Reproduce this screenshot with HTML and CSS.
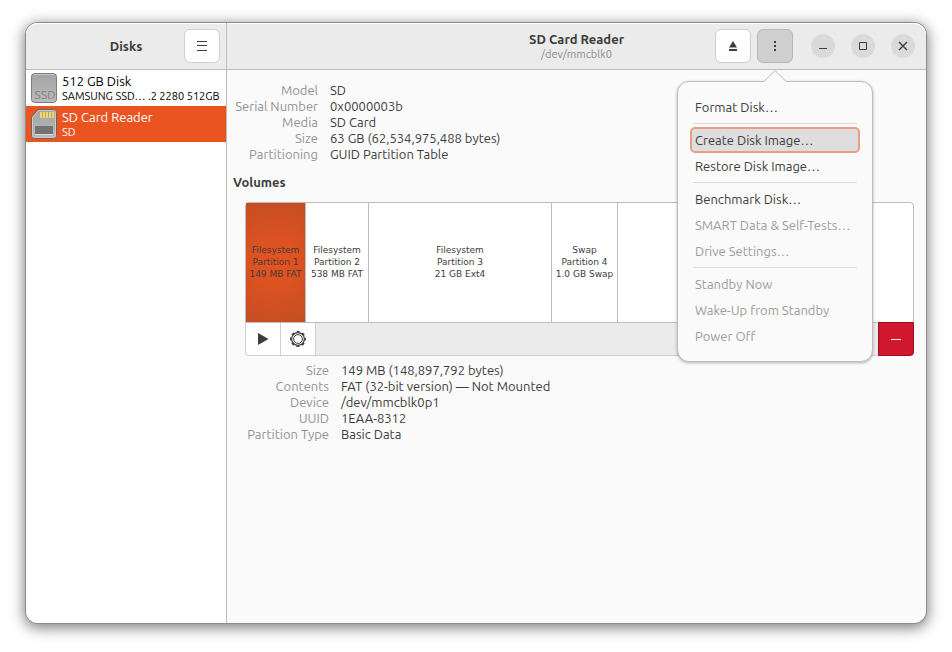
FILE: index.html
```
<!DOCTYPE html>
<html lang="en">
<head>
  <meta charset="UTF-8" />
  <title>Disks</title>
  <link rel="stylesheet" href="styles.css">
</head>
<body>

  <div class="window">
    <aside class="sidebar">
      <header class="titlebar sidebar-title">
        <h1>Disks</h1>
        <button type="button" class="tool" aria-label="Main menu">
          <svg width="16" height="16" viewBox="0 0 16 16"><path d="M3 3.5h10M3 7.5h10M3 12.5h10" stroke="#3d3d3d" fill="none" /></svg>
        </button>
      </header>

      <button type="button" class="disk">
        <svg width="28" height="32" viewBox="0 0 28 32">
          <defs>
            <linearGradient id="metal" x1="0" y1="0" x2="0" y2="1">
              <stop offset="0" stop-color="#a2a2a2" />
              <stop offset="1" stop-color="#bcbcbc" />
            </linearGradient>
          </defs>
          <rect x="1.5" y="1.5" width="25" height="29" rx="3" fill="url(#metal)" stroke="#7d7d7d" />
          <path d="M4 2.5h20" stroke="#c4c4c4" />
          <text x="15" y="27" class="ssd">SSD</text>
        </svg>
        <span class="disk-text">
          <span class="disk-name">512 GB Disk</span>
          <span class="disk-info">SAMSUNG SSD… .2 2280 512GB</span>
        </span>
      </button>

      <button type="button" class="disk selected">
        <svg width="28" height="32" viewBox="0 0 28 32">
          <path d="M8 1.5h15.500a3 3 0 0 1 3 3v23a3 3 0 0 1-3 3h-19a3 3 0 0 1-3-3V9z" fill="url(#metal)" stroke="#6f6259" />
          <path d="M8.500 2.500h15a2 2 0 0 1 2 2v23a2 2 0 0 1-2 2h-19a2 2 0 0 1-2-2V9.500z" fill="none" stroke="#c9c9c9" />
          <path d="M11 4v6M14 4v6M17 4v6M20 4v6M23 4v6" stroke="#fbd65c" stroke-width="2" />
          <rect x="5" y="18" width="18" height="8" fill="#737373" />
          <path d="M5 26.500h18" stroke="#dcdcdc" />
        </svg>
        <span class="disk-text">
          <span class="disk-name">SD Card Reader</span>
          <span class="disk-info">SD</span>
        </span>
      </button>
    </aside>

    <main class="content">
      <header class="titlebar main-title">
        <div class="heading">
          <h2>SD Card Reader</h2>
          <p>/dev/mmcblk0</p>
        </div>
        <div class="actions">
          <button type="button" class="tool" aria-label="Eject">
            <svg width="16" height="16" viewBox="0 0 16 16"><path d="M8 3l4 6.500H4zM4 11h8v2H4z" fill="#3d3d3d" /></svg>
          </button>
          <div class="menu-holder">
            <button type="button" class="tool pressed" aria-label="Drive menu">
              <svg width="16" height="16" viewBox="0 0 16 16"><path d="M7 3h2v2H7zM7 7h2v2H7zM7 11h2v2H7z" fill="#3d3d3d" /></svg>
            </button>
            <div class="popover">
              <svg class="arrow" width="24" height="12" viewBox="0 0 24 12"><path d="M1 11.500L12 .5L23 11.500V12H1z" fill="#fafafa" /><path d="M1 11.500L12 .5L23 11.500" fill="none" stroke="#bdbdbd" /></svg>
              <button type="button">Format Disk…</button>
              <hr>
              <button type="button" class="focused">Create Disk Image…</button>
              <button type="button">Restore Disk Image…</button>
              <hr>
              <button type="button">Benchmark Disk…</button>
              <button type="button" disabled>SMART Data &amp; Self-Tests…</button>
              <button type="button" disabled>Drive Settings…</button>
              <hr>
              <button type="button" disabled>Standby Now</button>
              <button type="button" disabled>Wake-Up from Standby</button>
              <button type="button" disabled>Power Off</button>
            </div>
          </div>
          <div class="controls">
            <button type="button" class="control" aria-label="Minimize">
              <svg width="16" height="16" viewBox="0 0 16 16"><path d="M4 10.500h8" stroke="#3d3d3d" /></svg>
            </button>
            <button type="button" class="control" aria-label="Maximize">
              <svg width="16" height="16" viewBox="0 0 16 16"><path d="M4.500 4.500h7v7h-7z" fill="none" stroke="#3d3d3d" /></svg>
            </button>
            <button type="button" class="control" aria-label="Close">
              <svg width="16" height="16" viewBox="0 0 16 16"><path d="M4 4l8 8M12 4l-8 8" stroke="#3d3d3d" stroke-width="1.400" /></svg>
            </button>
          </div>
        </div>
      </header>

      <div class="details">
        <dl class="info">
          <dt>Model</dt><dd>SD</dd>
          <dt>Serial Number</dt><dd>0x0000003b</dd>
          <dt>Media</dt><dd>SD Card</dd>
          <dt>Size</dt><dd>63 GB (62,534,975,488 bytes)</dd>
          <dt>Partitioning</dt><dd>GUID Partition Table</dd>
        </dl>

        <h3>Volumes</h3>

        <div class="volumes">
          <div class="partitions">
            <button type="button" class="partition selected">Filesystem<br>Partition 1<br>149 MB FAT</button>
            <button type="button" class="partition">Filesystem<br>Partition 2<br>538 MB FAT</button>
            <button type="button" class="partition">Filesystem<br>Partition 3<br>21 GB Ext4</button>
            <button type="button" class="partition">Swap<br>Partition 4<br>1.0 GB Swap</button>
            <button type="button" class="partition" aria-label="Free space"></button>
          </div>
          <div class="toolbar">
            <button type="button" aria-label="Mount">
              <svg width="16" height="16" viewBox="0 0 16 16"><path d="M3 2l10.500 6L3 14z" fill="#3d3d3d" /></svg>
            </button>
            <button type="button" aria-label="Partition options">
              <svg width="16" height="16" viewBox="0 0 16 16" fill="none" stroke="#3d3d3d">
                <circle cx="8" cy="8" r="7.300" stroke-width="1.400" stroke-dasharray="3 2.734" stroke-dashoffset="1.500" />
                <circle cx="8" cy="8" r="6.400" stroke-width="1.200" />
                <circle cx="8" cy="8" r="4.400" />
              </svg>
            </button>
            <button type="button" class="delete" aria-label="Delete partition">
              <svg width="16" height="16" viewBox="0 0 16 16"><path d="M3 8.500h10" stroke="#fff" /></svg>
            </button>
          </div>

          <dl class="info">
            <dt>Size</dt><dd>149 MB (148,897,792 bytes)</dd>
            <dt>Contents</dt><dd>FAT (32-bit version) — Not Mounted</dd>
            <dt>Device</dt><dd>/dev/mmcblk0p1</dd>
            <dt>UUID</dt><dd>1EAA-8312</dd>
            <dt>Partition Type</dt><dd>Basic Data</dd>
          </dl>
        </div>
      </div>
    </main>
  </div>

</body>
</html>
```
FILE: styles.css
```
* {
  box-sizing: border-box;
}
body {
  margin: 0;
  padding: 23px 26px 29px;
  height: 100vh;
  display: flex;
  background: #fff;
  color: #3d3d3d;
  font-family: Ubuntu, "Noto Sans", sans-serif;
  font-size: 13px;
  line-height: 16px;
}
h1, h2, h3, p, dl, dd {
  margin: 0;
  font-size: 13px;
}
button {
  margin: 0;
  padding: 0;
  border: none;
  background: none;
  color: inherit;
  font: inherit;
}
svg {
  display: block;
}

/* window frame */
.window {
  flex: 1;
  display: flex;
  border-radius: 12px;
  background: #fafafa;
  box-shadow: 0 0 0 1px #8c8c8c, 0 3px 14px 2px rgba(0, 0, 0, 0.5);
}
.titlebar {
  height: 47px;
  background: #ebebeb;
  border-bottom: 1px solid #bdbdbd;
  box-shadow: inset 0 1px #fff;
}

/* sidebar */
.sidebar {
  width: 201px;
  flex: none;
  background: #fff;
  border-right: 1px solid #bdbdbd;
  border-radius: 12px 0 0 12px;
}
.sidebar-title {
  display: flex;
  align-items: center;
  padding-right: 6px;
  border-top-left-radius: 12px;
}
.sidebar-title h1 {
  flex: 1;
  padding-left: 42px;
  text-align: center;
}
.tool {
  width: 36px;
  height: 34px;
  display: flex;
  align-items: center;
  justify-content: center;
  background: #fff;
  border: 1px solid #cfcfcf;
  border-radius: 6px;
}
.tool.pressed {
  background: #cfcfcf;
  border-color: #b8b8b8;
}
.disk {
  width: 100%;
  height: 36px;
  padding: 0 4px;
  display: flex;
  align-items: center;
  gap: 4px;
  color: #000;
  text-align: left;
  white-space: nowrap;
}
.disk.selected {
  background: #e95420;
  color: #fff;
}
.disk svg {
  flex: none;
}
.disk-text {
  min-width: 0;
}
.disk-name, .disk-info {
  display: block;
}
.disk-info {
  font-size: 11px;
  line-height: 14px;
}
.ssd {
  font-size: 12px;
  fill: #808080;
  text-anchor: middle;
}

/* main pane */
.content {
  flex: 1;
  min-width: 0;
}
.main-title {
  display: grid;
  grid-template-columns: 1fr auto 1fr;
  align-items: center;
  border-top-right-radius: 12px;
}
.heading {
  grid-column: 2;
  text-align: center;
}
.heading p {
  font-size: 11px;
  line-height: 14px;
  color: #8c8c8c;
}
.actions {
  display: flex;
  align-items: center;
  justify-content: flex-end;
  gap: 6px;
  padding-right: 11px;
}
.controls {
  display: flex;
  gap: 16px;
  margin-left: 12px;
}
.control {
  width: 24px;
  height: 24px;
  display: flex;
  align-items: center;
  justify-content: center;
  border-radius: 50%;
  background: #dadada;
}

/* drive menu */
.menu-holder {
  position: relative;
}
.popover {
  position: absolute;
  top: 52px;
  left: 50%;
  width: 196px;
  margin-left: -98px;
  padding: 12px;
  background: #fafafa;
  border: 1px solid #bdbdbd;
  border-radius: 12px;
  box-shadow: 0 1px 3px rgba(0, 0, 0, 0.3);
}
.arrow {
  position: absolute;
  top: -12px;
  left: 50%;
  margin-left: -12px;
}
.popover button {
  display: block;
  width: 100%;
  height: 26px;
  padding: 0 3px;
  border: 2px solid transparent;
  border-radius: 5px;
  text-align: left;
  white-space: nowrap;
}
.popover button:disabled {
  color: #9c9c9c;
}
.popover .focused {
  background: #dedede;
  border-color: #e99f83;
}
.popover hr {
  margin: 3px;
  border: none;
  border-top: 1px solid #dedede;
}

/* drive and volume details */
.details {
  padding: 12px 12px 12px 6px;
}
.info {
  display: grid;
  grid-template-columns: 85px 1fr;
  column-gap: 12px;
  white-space: nowrap;
}
.info dt {
  color: #949494;
  justify-self: end;
}
h3 {
  margin: 12px 0;
}
.volumes {
  padding-left: 12px;
}
.volumes .info {
  grid-template-columns: 84px 1fr;
  margin-top: 6px;
}
.partitions {
  display: grid;
  grid-template-columns: 60fr 63fr 183fr 66fr 295fr;
  height: 121px;
  background: #fff;
  border: 1px solid #bdbdbd;
  border-radius: 4px 4px 0 0;
}
.partition {
  min-width: 0;
  padding-bottom: 2px;
  color: #3d3d3d;
  border-right: 1px solid #bdbdbd;
  font-family: "DejaVu Sans", sans-serif;
  font-size: 9px;
  line-height: 12px;
  white-space: nowrap;
}
.partition:last-child {
  border-right: none;
}
.partition.selected {
  background: radial-gradient(circle, #e95420 0, #c44e24 66px);
}
.toolbar {
  display: flex;
  height: 33px;
  background: #ebebeb;
  border: 1px solid #cfcfcf;
  border-top: none;
  border-radius: 0 0 4px 4px;
}
.toolbar button {
  width: 35px;
  display: flex;
  align-items: center;
  justify-content: center;
  background: #fff;
  border-right: 1px solid #cfcfcf;
}
.toolbar button:first-child {
  border-bottom-left-radius: 4px;
}
.toolbar .delete {
  width: 36px;
  margin: -1px -1px -1px auto;
  background: #d0172d;
  border: 1px solid #9c1122;
  border-radius: 0 0 4px 0;
}
```
